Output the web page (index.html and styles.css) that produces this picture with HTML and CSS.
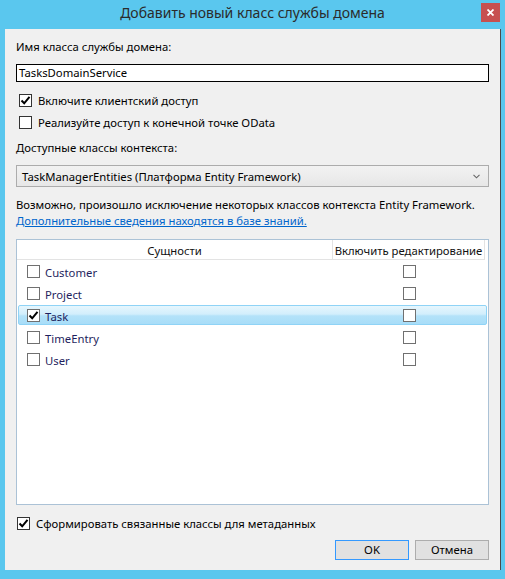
FILE: index.html
```html
<!DOCTYPE html>
<html lang="ru">
<head>
<meta charset="utf-8">
<title>Добавить новый класс службы домена</title>
<link rel="stylesheet" href="styles.css">
</head>
<body>
<div class="window">
  <div class="titlebar">
    <span class="spacer"></span>
    <span class="title">Добавить новый класс службы домена</span>
    <span class="close"><svg width="7" height="7" viewBox="0 0 7 7"><path d="M0.5 0.5 L6.5 6.5 M6.5 0.5 L0.5 6.5" stroke="#fff" stroke-width="1.8"/></svg></span>
  </div>
  <div class="client">
    <div class="label">Имя класса службы домена:</div>
    <div class="textbox">TasksDomainService</div>
    <div class="check-row first">
      <span class="cb checked"><svg width="11" height="11" viewBox="0 0 11 11"><path d="M1.5 5.5 L4.2 8.3 L9.5 1.8" fill="none" stroke="#000" stroke-width="2"/></svg></span>
      <span>Включите клиентский доступ</span>
    </div>
    <div class="check-row">
      <span class="cb"></span>
      <span>Реализуйте доступ к конечной точке OData</span>
    </div>
    <div class="label second">Доступные классы контекста:</div>
    <div class="combo">
      <span>TaskManagerEntities (Платформа Entity Framework)</span>
      <svg class="arrow" width="7" height="5" viewBox="0 0 7 5"><path d="M0.5 0.8 L3.5 3.8 L6.5 0.8" fill="none" stroke="#666" stroke-width="1.1"/></svg>
    </div>
    <div class="info">
      <div>Возможно, произошло исключение некоторых классов контекста Entity Framework.</div>
      <a class="link" href="#">Дополнительные сведения находятся в базе знаний.</a>
    </div>
    <div class="grid">
      <div class="header">
        <div class="hcol c1">Сущности</div>
        <div class="hcol c2">Включить редактирование</div>
      </div>
      <div class="row">
        <div class="cell c1"><span class="cb"></span><span>Customer</span></div>
        <div class="cell c2"><span class="cb"></span></div>
      </div>
      <div class="row">
        <div class="cell c1"><span class="cb"></span><span>Project</span></div>
        <div class="cell c2"><span class="cb"></span></div>
      </div>
      <div class="row selected">
        <div class="cell c1"><span class="cb checked"><svg width="11" height="11" viewBox="0 0 11 11"><path d="M1.5 5.5 L4.2 8.3 L9.5 1.8" fill="none" stroke="#000" stroke-width="2"/></svg></span><span>Task</span></div>
        <div class="cell c2"><span class="cb"></span></div>
      </div>
      <div class="row">
        <div class="cell c1"><span class="cb"></span><span>TimeEntry</span></div>
        <div class="cell c2"><span class="cb"></span></div>
      </div>
      <div class="row">
        <div class="cell c1"><span class="cb"></span><span>User</span></div>
        <div class="cell c2"><span class="cb"></span></div>
      </div>
    </div>
    <div class="check-row bottom">
      <span class="cb checked"><svg width="11" height="11" viewBox="0 0 11 11"><path d="M1.5 5.5 L4.2 8.3 L9.5 1.8" fill="none" stroke="#000" stroke-width="2"/></svg></span>
      <span>Сформировать связанные классы для метаданных</span>
    </div>
    <div class="buttons">
      <div class="btn default">OK</div>
      <div class="btn">Отмена</div>
    </div>
  </div>
</div>
</body>
</html>
```

FILE: styles.css
```css
* { box-sizing: border-box; }
html, body { margin: 0; padding: 0; }
body {
  background: #5ac7ee;
  font-family: "Noto Sans", "Open Sans", sans-serif;
  font-size: 11.3px;
  color: #000;
}
.window {
  width: 505px;
  height: 579px;
  background: #5ac7ee;
  display: flex;
  flex-direction: column;
}
.titlebar {
  height: 29px;
  display: grid;
  grid-template-columns: 1fr auto 1fr;
  align-items: start;
}
.title {
  font-size: 14px;
  color: #2b2b2b;
  line-height: 18px;
  margin-top: 4px;
  white-space: nowrap;
}
.close {
  justify-self: end;
  margin-top: 3px;
  margin-right: 5px;
  width: 19px;
  height: 19px;
  background: #c75050;
  display: flex;
  align-items: center;
  justify-content: center;
}
.close svg { display: block; }
.client {
  margin-left: 5px;
  width: 496px;
  height: 541px;
  background: #f0f0f0;
  border-right: 1px solid #4a4a4a;
  padding: 10px 11px 0 11px;
  display: flex;
  flex-direction: column;
}
.label { line-height: 16px; height: 16px; white-space: nowrap; }
.label.second { margin-top: 7px; }
.textbox {
  margin-top: 9px;
  height: 18px;
  border: 1px solid #000;
  background: #fff;
  padding-left: 2px;
  line-height: 16px;
}
.check-row {
  height: 22px;
  display: flex;
  align-items: center;
  padding-left: 3px;
  gap: 6px;
  white-space: nowrap;
}
.check-row.first { margin-top: 7px; }
.check-row.bottom { margin-top: 10px; height: 16px; padding-left: 1px; gap: 6px; }
.cb {
  width: 13px;
  height: 13px;
  border: 1px solid #333;
  background: #fff;
  display: inline-flex;
  align-items: center;
  justify-content: center;
  flex: none;
}
.cb svg { display: block; }
.combo {
  margin-top: 9px;
  height: 22px;
  border: 1px solid #acacac;
  background: linear-gradient(#f2f2f2, #e7e7e7);
  display: flex;
  align-items: center;
  justify-content: space-between;
  padding: 0 8px 0 5px;
  white-space: nowrap;
}
.combo .arrow { display: block; }
.info { margin-top: 10px; line-height: 16px; white-space: nowrap; }
.link { color: #0066cc; text-decoration: underline; display: block; }
.grid {
  margin-top: 10px;
  height: 266px;
  border: 1px solid #abc2d6;
  background: #fff;
  flex: none;
}
.header {
  height: 20px;
  display: flex;
  border-bottom: 1px solid #e3e3e3;
  width: 468px;
}
.hcol {
  line-height: 19px;
  padding-top: 1px;
  text-align: center;
  border-right: 1px solid #e3e3e3;
  white-space: nowrap;
  color: #111;
}
.hcol.c1 { width: 316px; }
.hcol.c2 { width: 152px; }
.row {
  height: 22px;
  display: flex;
  color: #1f1f5e;
}
.row .c1 {
  width: 316px;
  display: flex;
  align-items: center;
  padding-left: 10px;
  gap: 5px;
}
.row .c1 span:last-child { padding-top: 2px; }
.row .c2 {
  width: 152px;
  display: flex;
  align-items: center;
  justify-content: center;
}
.row .cb { border-color: #707070; }
.row.selected {
  margin: 1px 1px;
  height: 20px;
  border: 1px solid #8fd3f6;
  border-radius: 2px;
  background: linear-gradient(#e6f6fd 0%, #d2eefc 45%, #b3e2f9 55%, #a8ddf8 100%);
}
.row.selected .c1 { width: 315px; padding-left: 8px; }
.row.selected .c2 { width: 151px; }
.buttons {
  margin-top: 9px;
  display: flex;
  justify-content: flex-end;
  gap: 6px;
}
.btn {
  width: 74px;
  height: 20px;
  border: 1px solid #adadad;
  background: #e1e1e1;
  line-height: 18px;
  text-align: center;
}
.btn.default { border-color: #3399ff; }
```
